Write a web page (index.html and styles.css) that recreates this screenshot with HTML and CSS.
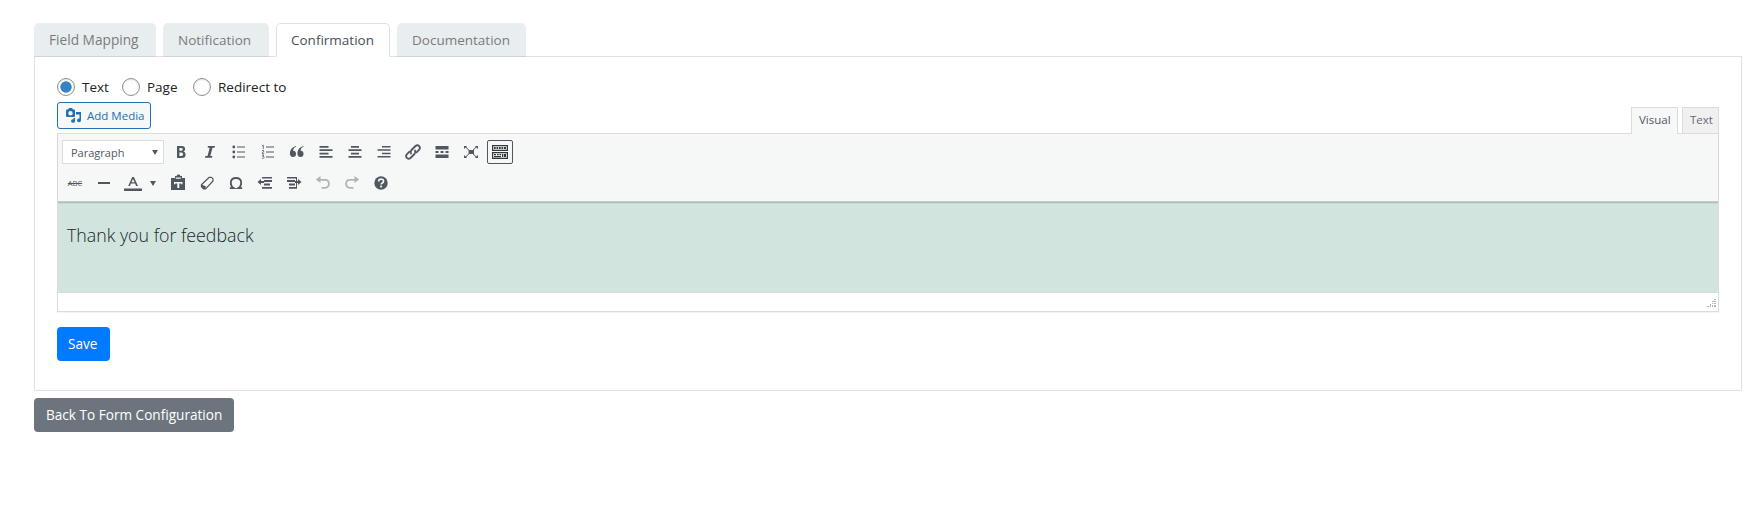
FILE: index.html
```html
<!DOCTYPE html>
<html lang="en">
<head>
<meta charset="utf-8">
<title>Form Confirmation</title>
<link rel="stylesheet" href="styles.css">
</head>
<body>
<nav class="tabs">
  <a class="tab t1"><span>Field Mapping</span></a>
  <a class="tab t2"><span>Notification</span></a>
  <a class="tab t3 active"><span>Confirmation</span></a>
  <a class="tab t4"><span>Documentation</span></a>
</nav>
<main class="panel">
  <div class="radios">
    <label class="r1"><i class="radio on"></i><span>Text</span></label>
    <label class="r2"><i class="radio"></i><span>Page</span></label>
    <label class="r3"><i class="radio"></i><span>Redirect to</span></label>
  </div>
  <div class="tools">
    <button class="media">
      <svg width="16" height="16" viewBox="0 0 16 16" fill="#2271b1"><path fill-rule="evenodd" d="M2 1.500L3 0h3l1 1.500h1q1 0 1 1V8q0 1-1 1H1Q0 9 0 8V2.500q0-1 1-1zM4.500 3a2.200 2.200 0 1 0 0 4.400a2.200 2.200 0 0 0 0-4.400z"/><path d="M10 4h5v8.300a2 1.800 0 1 1-1.500-1.700V6.500H10zM7.500 10H9v3a2 1.800 0 1 1-1.500-1.700z"/></svg>
      <span>Add Media</span>
    </button>
    <div class="modes"><span class="mode visual"><b>Visual</b></span><span class="mode text"><b>Text</b></span></div>
  </div>
  <section class="editor">
    <div class="toolbar">
      <div class="row">
        <div class="select"><span>Paragraph</span><svg width="6" height="5" viewBox="0 0 7 6"><path d="M0 0h7L3.500 6z" fill="#50575e"/></svg></div>
        <span class="cell"><svg viewBox="0 0 20 20"><path fill-rule="evenodd" d="M6 4h4.700q3.400 0 3.400 3 0 2-1.700 2.600 2.200.6 2.200 2.900 0 3.500-3.800 3.500H6zm2.400 2v2.700h1.900q1.400 0 1.400-1.400T10.200 6zm0 4.600V14h2q1.700 0 1.700-1.800 0-1.600-1.800-1.600z"/></svg></span>
        <span class="cell"><svg viewBox="0 0 20 20"><path d="M8 4h7l-.4 1.700h-2.100L10.300 14h2.100l-.4 1.700H5l.4-1.700h2.100l2.200-8.300H7.600z"/></svg></span>
        <span class="cell"><svg viewBox="0 0 20 20"><circle cx="4.800" cy="5" r="1.400"/><circle cx="4.800" cy="10" r="1.400"/><circle cx="4.800" cy="15" r="1.400"/><path d="M8 4.500h8v1H8zM8 9.500h8v1H8zM8 14.500h8v1H8z"/></svg></span>
        <span class="cell"><svg viewBox="0 0 20 20"><path d="M8 4.500h8v1H8zM8 9.500h8v1H8zM8 14.500h8v1H8z"/><path d="M4 4l1.300-.7V7M3.900 8.700q2-.9 2 .3 0 .8-2 2.300h2.300M3.900 13h2L4.800 14.400q1.400 0 1.300 1.100-.2 1.100-2.200.7" fill="none" stroke="#50575e" stroke-width=".8"/></svg></span>
        <span class="cell"><svg viewBox="0 0 20 20"><path d="M9.200 4.500Q6.300 5.600 6 8.800q3-.1 3 3 0 3.200-3 3.200-3.100 0-3.100-3.700Q3 6 8.800 4zM16.700 4.500q-2.900 1.100-3.200 4.300 3-.1 3 3 0 3.200-3 3.200-3.100 0-3.100-3.700.1-5.300 5.900-7.300z"/></svg></span>
        <span class="cell"><svg viewBox="0 0 20 20"><path d="M3.500 4h9v1.800h-9zM3.500 7.300h13v1.600h-13zM3.500 10.700h9v1.700h-9zM3.500 14h13v1.700h-13z"/></svg></span>
        <span class="cell"><svg viewBox="0 0 20 20"><path d="M6 4h8v1.800H6zM3.500 7.300h13v1.600h-13zM6 10.700h8v1.700H6zM3.500 14h13v1.700h-13z"/></svg></span>
        <span class="cell"><svg viewBox="0 0 20 20"><path d="M8 4h8.500v1.500H8zM3.500 7.300h13v1.400h-13zM8 10.700h8.500v1.500H8zM3.500 14h13v1.500h-13z"/></svg></span>
        <span class="cell"><svg viewBox="0 0 20 20"><g fill="none" stroke="#50575e" stroke-width="1.800" stroke-linecap="round"><path d="M8 11.500q-1-2 .5-3.500l4-4q2-1.500 3.700.1 1.500 1.700 0 3.600l-2.700 2.700"/><path d="M12 8.500q1 2-.5 3.500l-4 4q-2 1.500-3.700-.1-1.500-1.700 0-3.600l2.700-2.700"/></g></svg></span>
        <span class="cell"><svg viewBox="0 0 20 20"><path d="M3.500 4h13v3.500h-13zM3.500 9h3v2h-3zM8.500 9h3v2h-3zM13.500 9h3v2h-3zM3.500 12.500h13V16h-13z"/></svg></span>
        <span class="cell"><svg viewBox="0 0 20 20"><path d="M7.500 8h5.500v4H7.500zM3 4h3l-.8 1 2.900 2.700-.6.600L4.600 5.600 3 7zM17 4v3l-1.600-1.400-2.900 2.700-.6-.6L14.800 5 14 4zM3 16v-3l1.600 1.400 2.900-2.700.6.600L5.200 15l.8 1zM17 16h-3l.8-1-2.900-2.700.6-.6 2.900 2.700L17 13z"/></svg></span>
        <span class="cell pressed"><svg viewBox="0 0 20 20"><path fill-rule="evenodd" d="M2 3h16v6H2zm1.200 1.200v3.600h13.600V4.200zM2 10h16v7H2zm1.200 1.200v4.600h13.600v-4.600z"/><path d="M4 5h1.700v2H4zM6.500 5h1.700v2H6.500zM9 5h1.700v2H9zM11.500 5h1.700v2h-1.700zM14 5h2v2h-2zM4 12h2v1.300H4zM7 12h1.700v1.300H7zM9.500 12h1.700v1.300H9.500zM12 12h1.300v3H12zM14 12h2v3h-2zM4 14h7v1.300H4z"/></svg></span>
      </div>
      <div class="row second">
        <span class="cell"><b class="abc">ABC</b></span>
        <span class="cell"><svg viewBox="0 0 20 20"><path d="M4 9h12v2H4z"/></svg></span>
        <span class="cell split"><svg viewBox="0 0 36 20"><path fill-rule="evenodd" d="M9.200 4h1.700L15 13h-1.900l-1-2.500H7.900L7 13H5.200zM10 6L8.500 9.200h3.100z"/><path d="M1 15.500h18V18H1zM27 8h6l-3 5z"/></svg></span>
        <span class="cell"><svg viewBox="0 0 20 20"><path fill-rule="evenodd" d="M3 5h4V3h1.500l1-1.500h2L12.500 3H14v2h3v12H3zm3 4v2.300h1.200V10.500H9.300V15h2v-4.500h2v.8h1.200V9zM7.800 4.500v1.200h5V4.500z"/></svg></span>
        <span class="cell"><svg viewBox="0 0 20 20"><path fill="none" stroke="#50575e" stroke-width="1.200" stroke-linejoin="round" d="M12.300 4.300h2.200l1.500 1.500v2.200L8.600 15.800H6.500L4.400 13.600v-1.800z"/><path d="M4.300 11.600l4.500 1.700-.3 2.700H6.300l-2.100-2.200z"/></svg></span>
        <span class="cell"><svg viewBox="0 0 20 20"><path d="M3.800 15.200h4.100q-3.100-2-3.100-5.300 0-4.900 5.200-4.900t5.200 4.900q0 3.300-3.100 5.300h4.100" fill="none" stroke="#50575e" stroke-width="1.800"/></svg></span>
        <span class="cell"><svg viewBox="0 0 20 20"><path d="M7 4h10v1.500H7zM9 7h8v2H9zM9 10.500h6v2H9zM7 14h10v1.800H7zM2.500 9L6 6v2h3v2H6v2z"/></svg></span>
        <span class="cell"><svg viewBox="0 0 20 20"><path d="M3 4h10v1.500H3zM3 7h8v2H3zM5 10.500h6v2H5zM5 14h8v1.800H5zM17.500 9L14 6v2h-3v2h3v2z"/><path d="M12 5h1v10h-1z"/></svg></span>
        <span class="cell dim"><svg viewBox="0 0 20 20"><path d="M7.500 3v3H12q4.800.2 4.800 4.800T12 15.700H8.500V14H12q3-.1 3-3.200T12 7.800H7.500V10L2.800 6.500z"/></svg></span>
        <span class="cell dim"><svg viewBox="0 0 20 20"><path d="M12.500 3v3H8q-4.800.2-4.800 4.800T8 15.700h3.500V14H8q-3-.1-3-3.200t3-3h4.500V10l4.700-3.500z"/></svg></span>
        <span class="cell"><svg viewBox="0 0 20 20"><circle cx="10" cy="10" r="6.700"/><path d="M7.700 8.400q0-2.200 2.400-2.200t2.400 2q0 1.100-1.200 1.800-1.100.6-1.100 1.500" fill="none" stroke="#f6f7f7" stroke-width="1.700"/><circle cx="10.100" cy="13.500" r="1.100" fill="#f6f7f7"/></svg></span>
      </div>
    </div>
    <div class="content"><p>Thank you for feedback</p></div>
    <div class="status"><svg width="9" height="9" viewBox="0 0 9 9" fill="#aab8c6"><path d="M7 0h2v1H7zM5 2h4v1H5zM5 4h1v1H5zM7 4h2v1H7zM3 5h1v3H3zM5 6h1v2H5zM7 6h2v2H7zM0 7h2v1H0z"/></svg></div>
  </section>
  <button class="btn save"><span>Save</span></button>
</main>
<button class="btn back"><span>Back To Form Configuration</span></button>
</body>
</html>
```
FILE: styles.css
```css
* { box-sizing: border-box; }
body {
  margin: 0;
  padding: 23px 7px 0 34px;
  height: 508px;
  overflow: hidden;
  background: #fff;
  color: #212529;
  font-family: "Open Sans", "Noto Sans", sans-serif;
  font-size: 13.5px;
}
button { font-family: inherit; margin: 0; }
span { white-space: nowrap; }
.tabs { display: flex; gap: 7px; height: 34px; position: relative; }
.tab {
  height: 34px;
  padding: 0 0 0 15px;
  line-height: 34px;
  color: #7b7b7b;
  background: #e8edf0;
  border-bottom: 1px solid #cdd4da;
  border-radius: 5px 5px 0 0;
}
.t1 { width: 122px; font-size: 13.7px; }
.t2 { width: 106px; }
.t3 { width: 114px; }
.t4 { width: 129px; }
.tab.active {
  color: #495057;
  background: #fff;
  border: 1px solid #dee2e6;
  border-bottom-color: #fff;
  padding-left: 14px;
  line-height: 32px;
}
.panel {
  margin-top: -1px;
  height: 335px;
  padding: 21px 22px 0;
  border: 1px solid #dee2e6;
}
.radios { display: flex; height: 18px; margin-bottom: 1px; color: #222; }
.radios label { display: flex; gap: 7px; align-items: center; }
.r1 { width: 65px; }
.r2 { width: 71px; }
.radio {
  flex: none;
  width: 18px;
  height: 18px;
  border: 1px solid #8c8f94;
  border-radius: 50%;
  box-shadow: inset 0 1px 2px rgba(0, 0, 0, .1);
}
.radio.on { background: radial-gradient(circle, #3582c4 5.3px, #fff 6px); }
.tools { display: flex; justify-content: space-between; height: 36px; }
.media {
  display: flex;
  align-items: center;
  gap: 5px;
  width: 94px;
  height: 27px;
  margin-top: 5px;
  padding: 0 0 0 8px;
  color: #2271b1;
  background: #f6f7f7;
  border: 1px solid #2271b1;
  border-radius: 3px;
  font-size: 11.5px;
}
.modes { display: flex; gap: 4px; padding-top: 10px; }
.mode {
  height: 26px;
  padding-left: 7px;
  border: 1px solid #dcdcde;
  border-bottom: 0;
  line-height: 23px;
  font-size: 11.5px;
  color: #50575e;
}
.mode b { font-weight: 400; }
.visual { position: relative; width: 47px; height: 27px; background: #f6f7f7; }
.text { width: 37px; color: #646970; background: #f0f0f1; }
.editor { height: 179px; border: 1px solid #dcdcde; box-shadow: 0 1px 1px rgba(0, 0, 0, .04); }
.toolbar {
  position: relative;
  height: 68px;
  padding: 6px 4px;
  background: #f6f7f7;
  border-bottom: 1px solid #c8cccc;
  box-shadow: 0 1px 1px rgba(0, 40, 30, .2);
}
.row { display: flex; align-items: center; height: 24px; }
.second { margin-top: 7px; }
.second .cell:first-child { margin-left: -1.5px; }
.select {
  display: flex;
  justify-content: space-between;
  align-items: center;
  width: 102px;
  height: 24px;
  margin-right: 2.5px;
  padding: 0 5px 0 8px;
  border: 1px solid #dcdcde;
  background: #fff;
  color: #50575e;
  font-size: 11px;
}
.cell { flex: none; display: flex; width: 29px; height: 24px; align-items: center; justify-content: center; }
.cell svg { flex: none; width: 20px; height: 20px; fill: #50575e; }
.cell.split { width: 45px; justify-content: flex-start; padding-left: 4px; }
.cell.split svg { width: 36px; }
.cell.dim svg { fill: #b1b4b7; }
.cell.pressed { width: 26px; margin-left: 1px; border: 1px solid #50575e; border-radius: 2px; }
.cell.pressed svg { fill: #32373c; }
.abc { font-size: 7.5px; font-weight: 400; color: #50575e; text-decoration: line-through; }
.content { height: 90px; padding: 19px 9px; background: #d1e4dd; }
.content p { margin: 0; line-height: 28px; font-size: 17.8px; color: #1c2430; font-weight: 300; }
.status { display: flex; justify-content: flex-end; align-items: flex-end; height: 19px; padding: 0 2px 3px; border-top: 1px solid #dcdcde; }
.btn { display: block; height: 34px; border: 0; border-radius: 4px; color: #fff; font-size: 13.6px; text-align: left; }
.save { width: 53px; margin-top: 15px; padding: 0 0 1px 11px; background: #007bff; }
.back { width: 200px; margin-top: 7px; padding: 0 0 1px 12px; background: #6c757d; }
```
